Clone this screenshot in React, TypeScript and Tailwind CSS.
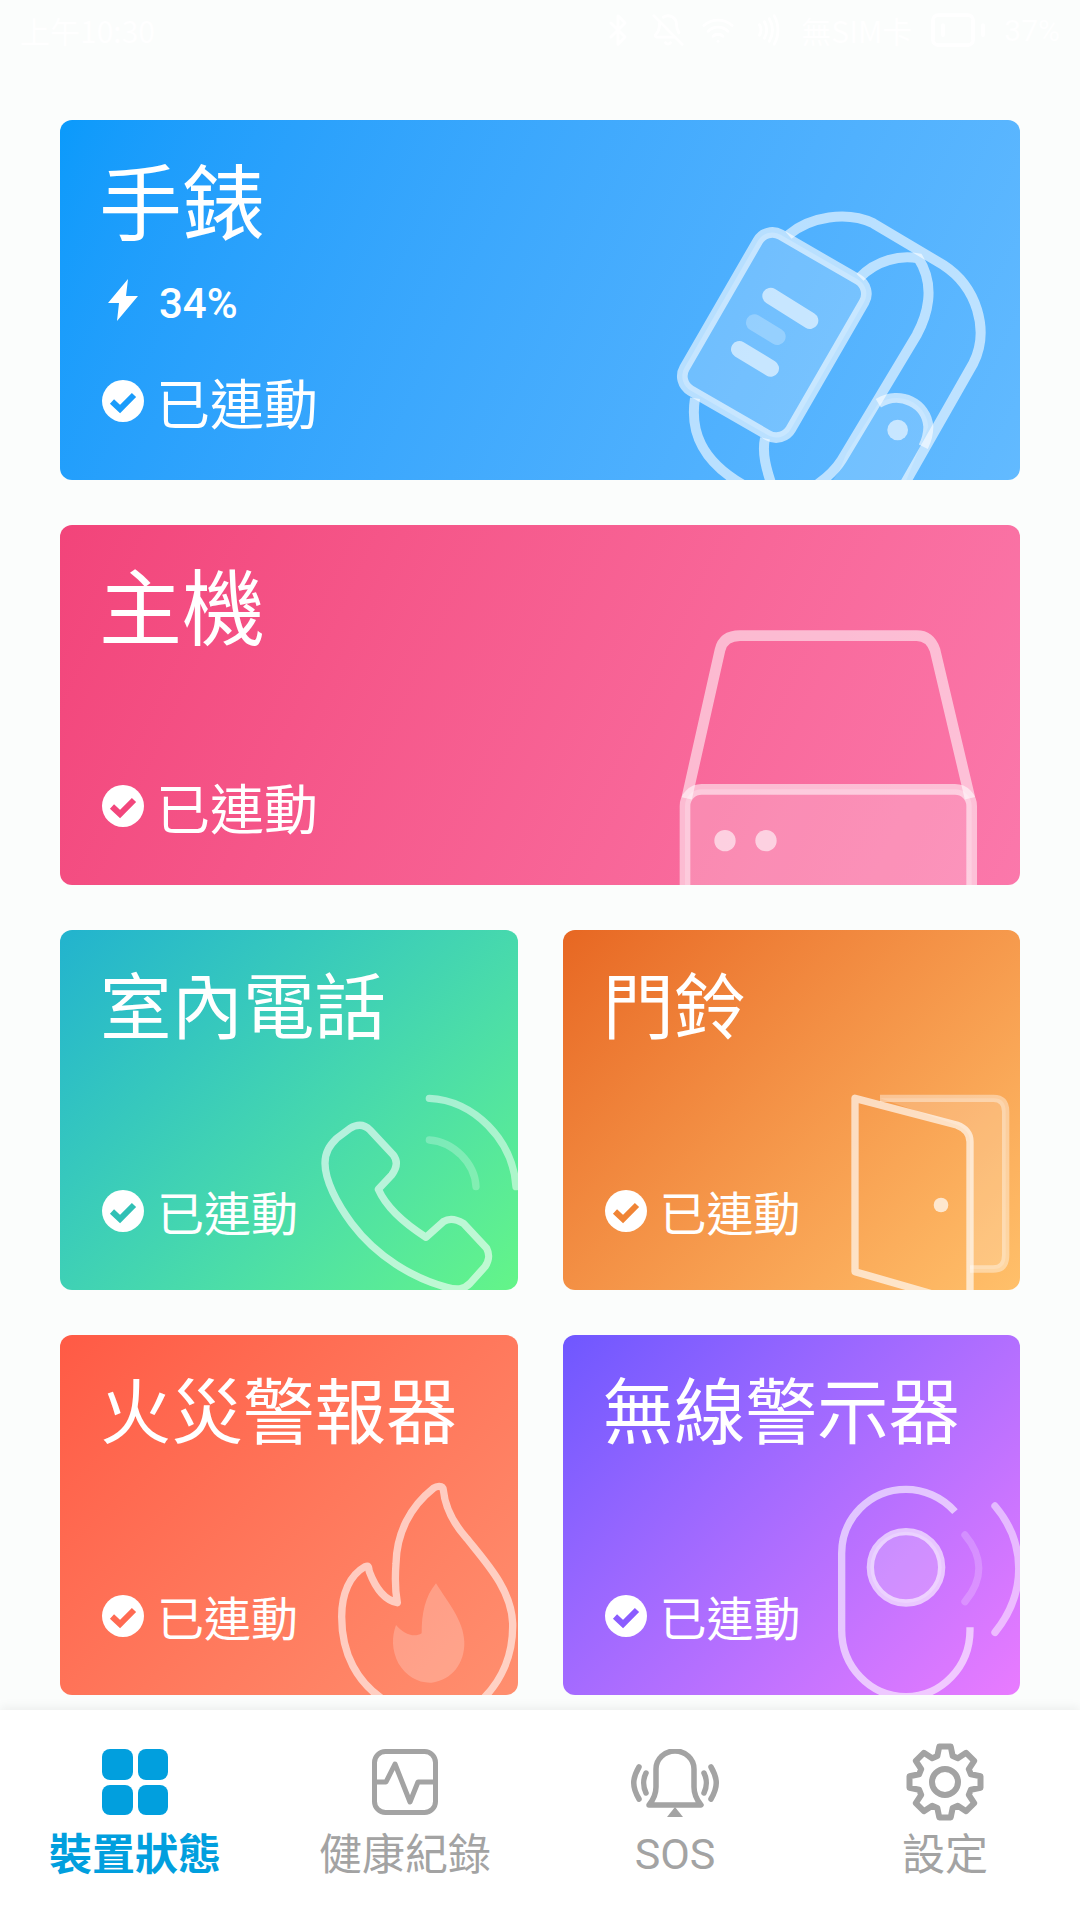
import React from "react";
import { Bluetooth, BellOff, Wifi, Nfc, BatteryLow } from "lucide-react";

const WHITE = "#ffffff";

// 8 tooth gear outline for the settings tab
const gearPath = (() => {
  const pts: string[] = [];
  for (let i = 0; i < 8; i++) {
    const a = (i * Math.PI) / 4 - Math.PI / 2;
    [
      [27, -0.29],
      [36, -0.16],
      [36, 0.16],
      [27, 0.29],
    ].forEach(([r, d]) => {
      pts.push(`${(40 + r * Math.cos(a + d)).toFixed(1)} ${(40 + r * Math.sin(a + d)).toFixed(1)}`);
    });
  }
  return "M" + pts.join("L") + "Z";
})();

const Watch = () => (
  <svg viewBox="0 0 1110 900" className="absolute left-[600px] top-[70px] w-[370px] h-[300px]" fill="none">
    <path d="M655 640C720 600 800 640 805 710L735 880H510C540 850 550 810 560 790Z" fill={WHITE} fillOpacity=".16" />
    <g stroke={WHITE} strokeOpacity=".6" strokeWidth="30">
      <path d="M385 135C450 80 560 62 640 100L850 225C950 290 990 420 940 520L735 880" />
      <path d="M600 262C650 210 720 195 775 205C830 290 800 380 770 435L545 810C520 850 490 870 470 885" />
      <path d="M105 625C90 720 120 810 250 885" />
      <path d="M315 745C305 790 320 840 335 885" />
      <path d="M655 640C720 600 800 640 805 710C805 735 800 750 790 770" />
    </g>
    <rect x="-184" y="-270" width="368" height="540" rx="50" transform="translate(343 435) rotate(30)" fill={WHITE} fillOpacity=".2" stroke={WHITE} strokeOpacity=".6" strokeWidth="32" />
    <g stroke={WHITE} strokeLinecap="round" strokeWidth="50">
      <path d="M332 318L450 392" strokeOpacity=".6" />
      <path d="M283 398L352 440" strokeOpacity=".25" />
      <path d="M238 478L332 535" strokeOpacity=".6" />
    </g>
    <circle cx="713" cy="720" r="31" fill={WHITE} fillOpacity=".6" />
  </svg>
);

const Server = () => (
  <svg viewBox="0 0 1110 870" className="absolute left-[600px] top-[85px] w-[370px] h-[290px]" fill="none">
    <path d="M80 565L180 120Q190 77 240 77H770Q810 77 825 120L930 565" stroke={WHITE} strokeOpacity=".55" strokeWidth="32" />
    <rect x="75" y="538" width="860" height="340" rx="50" fill={WHITE} fillOpacity=".22" stroke={WHITE} strokeOpacity=".55" strokeWidth="32" />
    <circle cx="195" cy="692" r="32" fill={WHITE} fillOpacity=".6" />
    <circle cx="318" cy="692" r="32" fill={WHITE} fillOpacity=".6" />
  </svg>
);

const Phone = () => (
  <svg viewBox="0 0 690 660" className="absolute left-[240px] top-[150px] w-[230px] h-[220px]" fill="none">
    <path
      d="M150 145C175 130 195 135 210 150L280 225C295 245 290 265 275 285L235 328C260 385 320 435 378 472L430 425C450 412 470 418 490 430L560 505C570 525 568 540 555 560L510 610C490 630 470 630 440 622C340 595 230 530 155 430C110 370 75 300 75 250C75 215 90 195 110 175Z"
      stroke={WHITE}
      strokeOpacity=".6"
      strokeWidth="22"
      strokeLinejoin="round"
    />
    <path d="M388 55C520 60 640 180 648 320" stroke={WHITE} strokeOpacity=".5" strokeWidth="22" strokeLinecap="round" />
    <path d="M388 180C460 185 525 250 528 320" stroke={WHITE} strokeOpacity=".25" strokeWidth="22" strokeLinecap="round" />
  </svg>
);

const Door = () => (
  <svg viewBox="0 0 600 660" className="absolute left-[267px] top-[150px] w-[200px] h-[220px]" fill="none">
    <path d="M150 55H490Q527 55 527 95V525Q527 567 490 567H420V185Q420 150 380 135Z" fill={WHITE} fillOpacity=".18" />
    <path d="M150 55H490Q527 55 527 95V525Q527 567 490 567H420" stroke={WHITE} strokeOpacity=".4" strokeWidth="22" />
    <path d="M75 55L380 135Q420 150 420 185V640M75 55V575L300 640" stroke={WHITE} strokeOpacity=".65" strokeWidth="22" strokeLinejoin="round" strokeLinecap="round" />
    <circle cx="333" cy="375" r="22" fill={WHITE} fillOpacity=".7" />
  </svg>
);

const Flame = () => (
  <svg viewBox="0 0 630 690" className="absolute left-[260px] top-[135px] w-[210px] h-[230px]" fill="none">
    <path
      d="M200 695C110 640 65 550 65 440C65 370 90 315 135 290C150 285 145 295 148 305C165 350 190 390 232 398C225 360 225 320 228 280C230 190 270 110 340 55C350 48 368 45 370 60C375 110 400 160 440 205C500 280 575 360 578 460C580 560 540 640 480 695"
      stroke={WHITE}
      strokeOpacity=".6"
      strokeWidth="22"
      strokeLinejoin="round"
    />
    <path
      d="M348 340C315 380 305 430 305 490C280 505 250 490 228 465C215 500 215 540 235 580C260 620 295 640 335 638C395 630 435 580 433 515C430 450 385 400 348 340Z"
      fill={WHITE}
      fillOpacity=".22"
    />
  </svg>
);

const Alarm = () => (
  <svg viewBox="0 0 630 690" className="absolute left-[257px] top-[135px] w-[210px] h-[230px]" fill="none">
    <path d="M405 125C365 80 310 58 258 58C150 58 65 145 65 250V480C65 590 150 680 258 680C365 680 450 590 450 480V472" stroke={WHITE} strokeOpacity=".6" strokeWidth="22" />
    <circle cx="258" cy="292" r="107" fill={WHITE} fillOpacity=".2" stroke={WHITE} strokeOpacity=".6" strokeWidth="22" />
    <path d="M435 195C490 260 490 330 435 395" stroke={WHITE} strokeOpacity=".2" strokeWidth="22" strokeLinecap="round" />
    <path d="M525 108C620 220 620 370 525 487" stroke={WHITE} strokeOpacity=".5" strokeWidth="22" strokeLinecap="round" />
  </svg>
);

const CheckBadge = ({ color }: { color: string }) => (
  <svg viewBox="0 0 42 42" className="w-[42px] h-[42px] shrink-0">
    <circle cx="21" cy="21" r="21" fill={WHITE} />
    <path d="M10 21.5L18 29L32 15" fill="none" stroke={color} strokeWidth="6" />
  </svg>
);

interface CardProps {
  title: string;
  gradient: string;
  checkColor: string;
  large?: boolean;
  battery?: string;
  children: React.ReactNode;
}

const DeviceCard = ({ title, gradient, checkColor, large, battery, children }: CardProps) => (
  <div className={`relative overflow-hidden rounded-[12px] h-[360px] pl-[42px] pt-[30px] pb-[49px] flex flex-col text-white ${gradient}`}>
    {children}
    <div className={large ? "relative -ml-[3px] mb-[4px] text-[83px] leading-[96px]" : "relative -ml-[2px] mb-[4px] text-[71.5px] leading-[84px] whitespace-nowrap"}>{title}</div>
    {battery && (
      <div className="relative mt-[20px] h-[60px] flex items-center">
        <svg viewBox="0 0 30 42" className="w-[30px] h-[42px] ml-[6px]">
          <path d="M20 0L0 24H11L9 42L30 17H18Z" fill={WHITE} />
        </svg>
        <span className="ml-[21px] mt-[6px] text-[42px] font-medium font-['Roboto',sans-serif]">{battery}</span>
      </div>
    )}
    <div className="relative mt-auto h-[60px] flex items-center">
      <CheckBadge color={checkColor} />
      <span className={large ? "ml-[12px] text-[54px]" : "ml-[13px] text-[47px]"}>已連動</span>
    </div>
  </div>
);

const tabLabel = "mt-[14px] text-[43px] leading-[44px] text-[#a3a3a3]";

export default function App() {
  return (
    <div className="w-[1080px] h-[1920px] flex flex-col bg-[#fbfdfc] font-['Noto_Sans_CJK_TC','Noto_Sans',sans-serif]">
      <div className="h-[60px] shrink-0 flex items-center justify-between px-[20px] text-white text-[30px]">
        <span>上午10:30</span>
        <div className="flex items-center gap-[16px]">
          <Bluetooth size={34} />
          <BellOff size={34} />
          <Wifi size={34} />
          <Nfc size={34} />
          <span>無SIM卡</span>
          <BatteryLow size={60} strokeWidth={1.5} />
          <span className="font-['Roboto',sans-serif]">37%</span>
        </div>
      </div>

      <main className="flex-1 px-[60px] pt-[60px] flex flex-col gap-[45px]">
        <DeviceCard large title="手錶" battery="34%" gradient="bg-linear-115 from-[#0a9afb] to-[#62baff]" checkColor="#1a9cfb">
          <Watch />
        </DeviceCard>
        <DeviceCard large title="主機" gradient="bg-linear-115 from-[#f2447a] to-[#fb78ab]" checkColor="#f2467c">
          <Server />
        </DeviceCard>
        <div className="grid grid-cols-2 gap-[45px]">
          <DeviceCard title="室內電話" gradient="bg-linear-135 from-[#22b3ce] to-[#64f588]" checkColor="#30c0b5">
            <Phone />
          </DeviceCard>
          <DeviceCard title="門鈴" gradient="bg-linear-135 from-[#e76722] to-[#ffc06a]" checkColor="#f08435">
            <Door />
          </DeviceCard>
        </div>
        <div className="grid grid-cols-2 gap-[45px]">
          <DeviceCard title="火災警報器" gradient="bg-linear-135 from-[#ff5a45] to-[#ff8f6f]" checkColor="#ff6a52">
            <Flame />
          </DeviceCard>
          <DeviceCard title="無線警示器" gradient="bg-linear-135 from-[#6f57ff] to-[#e97bff]" checkColor="#8a5cff">
            <Alarm />
          </DeviceCard>
        </div>
      </main>

      <nav className="h-[210px] shrink-0 bg-white grid grid-cols-4 pt-[39px] shadow-[0_-3px_10px_rgba(0,0,0,0.06)]">
        <div className="flex flex-col items-center">
          <div className="w-[66px] h-[66px] grid grid-cols-2 gap-[5px]">
            <div className="rounded-[8px] bg-[#019fde]" />
            <div className="rounded-[8px] bg-[#019fde]" />
            <div className="rounded-[8px] bg-[#019fde]" />
            <div className="rounded-[8px] bg-[#019fde]" />
          </div>
          <span className="mt-[14px] text-[43px] leading-[44px] font-bold text-[#019fde]">裝置狀態</span>
        </div>
        <div className="flex flex-col items-center">
          <svg viewBox="0 0 66 66" className="w-[66px] h-[66px]" fill="none" stroke="#a3a3a3" strokeWidth="5">
            <rect x="2.5" y="2.5" width="61" height="61" rx="11" />
            <path d="M3 33H14L23 15L38 53L46 33H63" strokeLinejoin="round" />
          </svg>
          <span className={tabLabel}>健康紀錄</span>
        </div>
        <div className="flex flex-col items-center">
          <svg viewBox="0 0 90 68" className="w-[90px] h-[68px]" fill="none" stroke="#a3a3a3" strokeWidth="5.5">
            <path d="M19 56C24 50 26 44 26 38V20A19 18 0 0 1 64 20V38C64 44 66 50 71 56Z" strokeLinejoin="round" />
            <path d="M37 68L45 58L53 68Z" fill="#a3a3a3" stroke="none" />
            <path d="M9 18C2 30 2 38 9 50M16 24C13 30 13 38 16 44M81 18C88 30 88 38 81 50M74 24C77 30 77 38 74 44" strokeLinecap="round" />
          </svg>
          <span className="mt-[15px] text-[43px] leading-[44px] text-[#a3a3a3] font-['Roboto',sans-serif]">SOS</span>
        </div>
        <div className="flex flex-col items-center">
          <div className="h-[66px] flex items-center">
            <svg viewBox="0 0 80 80" className="w-[80px] h-[80px]" fill="none" stroke="#a3a3a3" strokeWidth="6">
              <path d={gearPath} strokeLinejoin="round" />
              <circle cx="40" cy="40" r="13" />
            </svg>
          </div>
          <span className={tabLabel}>設定</span>
        </div>
      </nav>
    </div>
  );
}
